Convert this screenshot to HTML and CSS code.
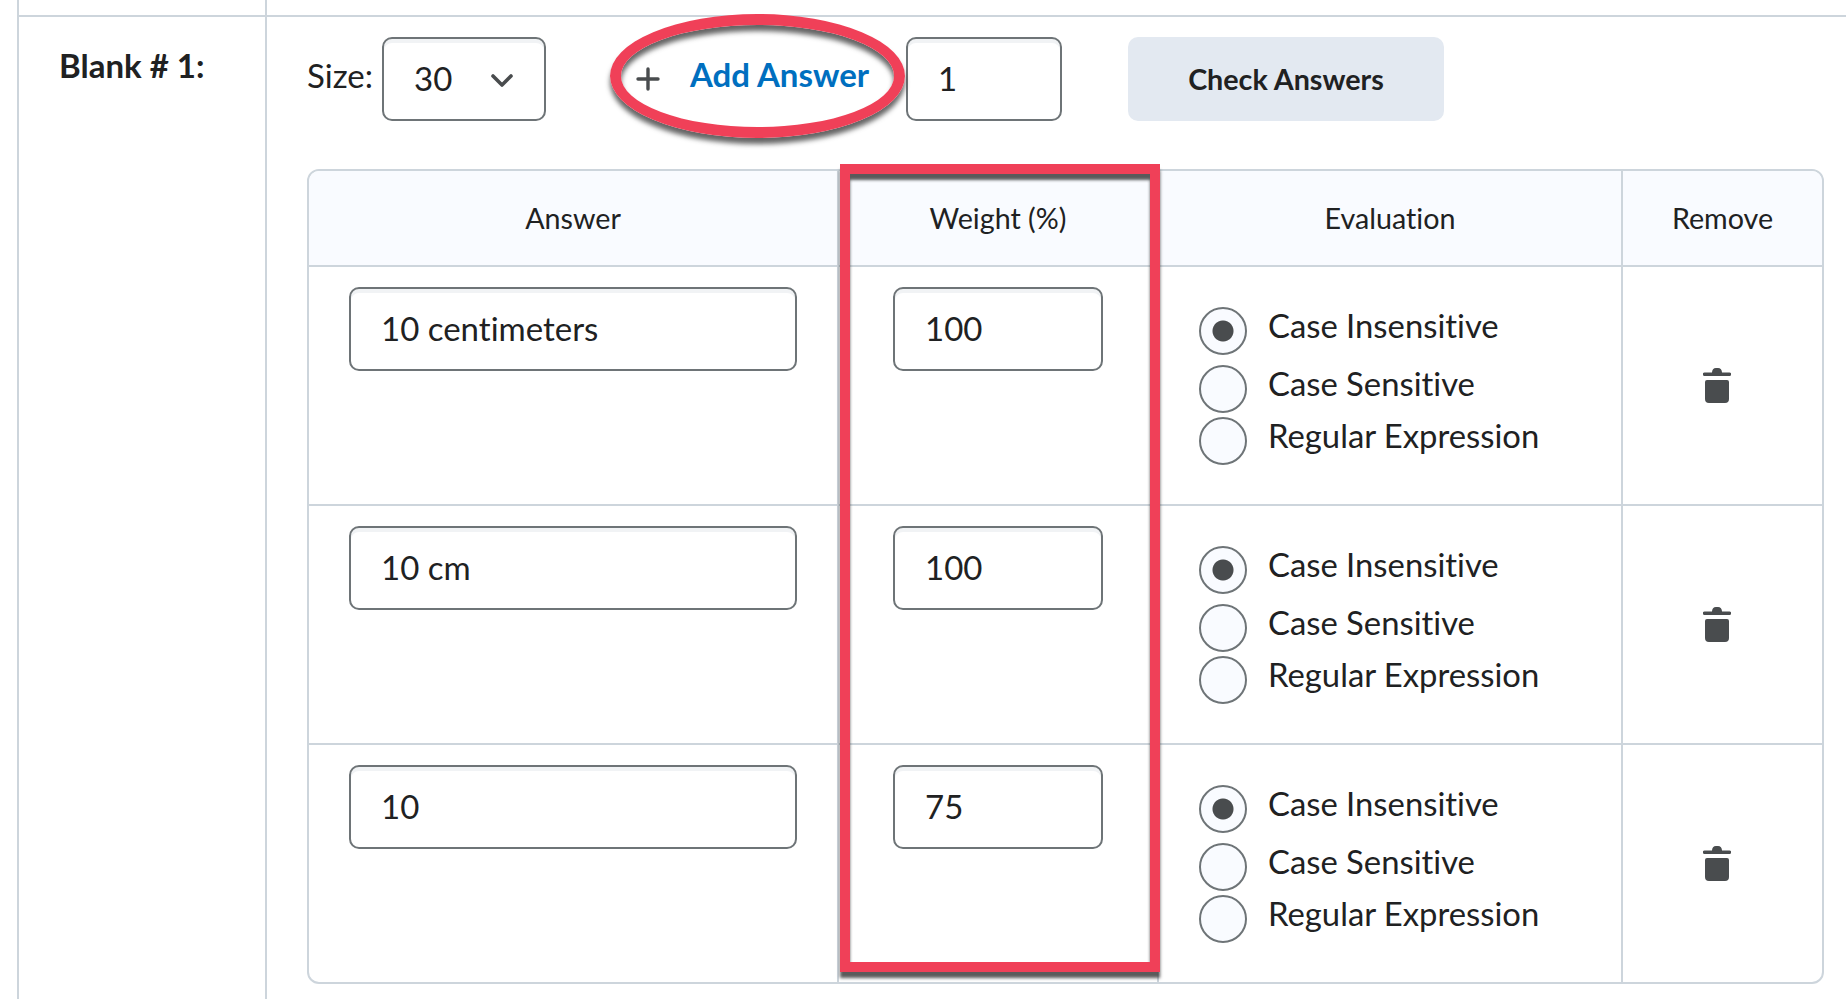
FILE: index.html
```html
<!DOCTYPE html>
<html lang="en">
<head>
    <meta charset="UTF-8">
    <title>Fill in the Blanks</title>
    <link rel="stylesheet" href="styles.css">
</head>
<body>
    <div class="outer">
        <div class="form-row top-row">
            <div class="label-cell"></div>
            <div class="body-cell"></div>
        </div>
        <div class="form-row">
            <div class="label-cell blank-label">Blank # 1:</div>
            <div class="body-cell blank-body">
                <div class="toolbar">
                    <label class="size-label" for="size">Size:</label>
                    <div class="select-wrap">
                        <select id="size" class="size-select">
                            <option>30</option>
                        </select>
                        <svg class="chevron" width="22" height="13" viewBox="0 0 22 13">
                            <path d="M2 2l9 9 9-9" fill="none" stroke="#494c4e" stroke-width="3.6" stroke-linecap="round" stroke-linejoin="round"/>
                        </svg>
                    </div>
                    <button class="add-answer" type="button">
                        <svg width="24" height="24" viewBox="0 0 24 24">
                            <path d="M12 2v20M2 12h20" fill="none" stroke="#494c4e" stroke-width="3.4" stroke-linecap="round"/>
                        </svg>
                        <span>Add Answer</span>
                    </button>
                    <input class="text-input count-input" type="text" value="1">
                    <button class="check-answers" type="button">Check Answers</button>
                </div>

                <table class="answers">
                    <thead>
                        <tr>
                            <th class="col-answer">Answer</th>
                            <th class="col-weight">Weight (%)</th>
                            <th class="col-eval">Evaluation</th>
                            <th class="col-remove">Remove</th>
                        </tr>
                    </thead>
                    <tbody>
                        <tr>
                            <td><input class="text-input answer-input" type="text" value="10 centimeters"></td>
                            <td><input class="text-input weight-input" type="text" value="100"></td>
                            <td class="eval-cell">
                                <label class="eval-opt"><input type="radio" name="eval1" checked><span>Case Insensitive</span></label>
                                <label class="eval-opt"><input type="radio" name="eval1"><span>Case Sensitive</span></label>
                                <label class="eval-opt"><input type="radio" name="eval1"><span>Regular Expression</span></label>
                            </td>
                            <td class="remove-cell">
                                <svg width="28" height="35" viewBox="0 0 28 35"><path fill="#494c4e" d="M9 4.500C9 2 10.500 0 13 0h2c2.500 0 4 2 4 4.500h7.500a1.500 1.500 0 0 1 0 3.500H1.500a1.500 1.500 0 0 1 0-3.500zM4 12h20a2 2 0 0 1 2 2v17a4 4 0 0 1-4 4H6a4 4 0 0 1-4-4V14a2 2 0 0 1 2-2z"/></svg>
                            </td>
                        </tr>
                        <tr>
                            <td><input class="text-input answer-input" type="text" value="10 cm"></td>
                            <td><input class="text-input weight-input" type="text" value="100"></td>
                            <td class="eval-cell">
                                <label class="eval-opt"><input type="radio" name="eval2" checked><span>Case Insensitive</span></label>
                                <label class="eval-opt"><input type="radio" name="eval2"><span>Case Sensitive</span></label>
                                <label class="eval-opt"><input type="radio" name="eval2"><span>Regular Expression</span></label>
                            </td>
                            <td class="remove-cell">
                                <svg width="28" height="35" viewBox="0 0 28 35"><path fill="#494c4e" d="M9 4.500C9 2 10.500 0 13 0h2c2.500 0 4 2 4 4.500h7.500a1.500 1.500 0 0 1 0 3.500H1.500a1.500 1.500 0 0 1 0-3.500zM4 12h20a2 2 0 0 1 2 2v17a4 4 0 0 1-4 4H6a4 4 0 0 1-4-4V14a2 2 0 0 1 2-2z"/></svg>
                            </td>
                        </tr>
                        <tr>
                            <td><input class="text-input answer-input" type="text" value="10"></td>
                            <td><input class="text-input weight-input" type="text" value="75"></td>
                            <td class="eval-cell">
                                <label class="eval-opt"><input type="radio" name="eval3" checked><span>Case Insensitive</span></label>
                                <label class="eval-opt"><input type="radio" name="eval3"><span>Case Sensitive</span></label>
                                <label class="eval-opt"><input type="radio" name="eval3"><span>Regular Expression</span></label>
                            </td>
                            <td class="remove-cell">
                                <svg width="28" height="35" viewBox="0 0 28 35"><path fill="#494c4e" d="M9 4.500C9 2 10.500 0 13 0h2c2.500 0 4 2 4 4.500h7.500a1.500 1.500 0 0 1 0 3.500H1.500a1.500 1.500 0 0 1 0-3.500zM4 12h20a2 2 0 0 1 2 2v17a4 4 0 0 1-4 4H6a4 4 0 0 1-4-4V14a2 2 0 0 1 2-2z"/></svg>
                            </td>
                        </tr>
                    </tbody>
                </table>
            </div>
        </div>
    </div>

    <!-- annotations drawn over the screenshot -->
    <div class="callout-oval"></div>
    <div class="callout-box"></div>
</body>
</html>
```

FILE: styles.css
```css
body {
    margin: 0;
    height: 1000px;
    overflow: hidden;
    position: relative;
    background: #ffffff;
    color: #202122;
    font-family: Lato, "Open Sans", sans-serif;
    font-size: 33px;
    font-variant-ligatures: none;
}

.outer {
    margin-left: 17px;
    border-left: 2px solid #cdd5dc;
}

.form-row {
    display: flex;
}

.top-row {
    height: 17px;
    border-bottom: 2px solid #cdd5dc;
    box-sizing: border-box;
}

.label-cell {
    width: 248px;
    flex-shrink: 0;
    box-sizing: border-box;
    border-right: 2px solid #cdd5dc;
}

.body-cell {
    flex: 1;
}

.blank-label {
    padding: 27px 0 0 40px;
    font-size: 33px;
    font-weight: 700;
    line-height: 42px;
}

.blank-body {
    padding: 20px 22px 15px 40px;
}

.toolbar {
    display: flex;
    align-items: center;
    height: 84px;
    margin-bottom: 48px;
}

.size-label {
    width: 75px;
    margin-bottom: 8px;
}

.select-wrap {
    position: relative;
    height: 84px;
}

.size-select {
    appearance: none;
    width: 164px;
    height: 84px;
    padding: 0 0 2px 30px;
    box-sizing: border-box;
    border: 2px solid #6e7477;
    border-radius: 10px;
    background: #ffffff;
    box-shadow: inset 0 4px 0 #f1f3f5;
    color: #202122;
    font-family: inherit;
    font-size: 33px;
    font-variant-ligatures: none;
}

.chevron {
    position: absolute;
    top: 37px;
    right: 33px;
}

.add-answer {
    display: flex;
    align-items: center;
    gap: 30px;
    width: 270px;
    height: 84px;
    margin-left: 90px;
    padding: 0;
    border: none;
    background: none;
    color: #006fbf;
    font-family: inherit;
    font-size: 33px;
    font-weight: 700;
    font-variant-ligatures: none;
}

.add-answer span {
    margin-bottom: 10px;
}

.text-input {
    height: 84px;
    padding: 0 0 2px 30px;
    box-sizing: border-box;
    border: 2px solid #6e7477;
    border-radius: 10px;
    background: #ffffff;
    box-shadow: inset 0 4px 0 #f1f3f5;
    color: #202122;
    font-family: inherit;
    font-size: 33px;
    font-variant-ligatures: none;
}

.count-input {
    width: 156px;
}

.answer-input {
    width: 448px;
}

.weight-input {
    width: 210px;
}

.check-answers {
    width: 316px;
    height: 84px;
    margin-left: 66px;
    padding: 0;
    border: none;
    border-radius: 10px;
    background: #e3e9f1;
    color: #202122;
    font-family: inherit;
    font-size: 28.7px;
    font-weight: 700;
}

.answers {
    width: 1517px;
    table-layout: fixed;
    border-collapse: separate;
    border-spacing: 0;
    border: 2px solid #cdd5dc;
    border-radius: 12px;
}

.answers th {
    height: 96px;
    padding: 0;
    box-sizing: border-box;
    background: #f9fbff;
    font-size: 28.7px;
    font-weight: 400;
    border-right: 2px solid #cdd5dc;
    border-bottom: 2px solid #cdd5dc;
}

.answers th:first-child {
    border-top-left-radius: 10px;
}

.answers th:last-child {
    border-top-right-radius: 10px;
    border-right: none;
}

.col-answer {
    width: 530px;
}

.col-weight {
    width: 320px;
}

.col-eval {
    width: 464px;
}

.answers td {
    height: 239px;
    padding: 20px 0 0 0;
    box-sizing: border-box;
    vertical-align: top;
    text-align: center;
    border-right: 2px solid #cdd5dc;
    border-bottom: 2px solid #cdd5dc;
}

.answers tbody tr:last-child td {
    height: 237px;
    border-bottom: none;
}

.answers td:last-child {
    border-right: none;
}

.answers .eval-cell {
    padding: 40px 0 0 40px;
    text-align: left;
}

.eval-opt {
    display: flex;
    align-items: center;
    gap: 21px;
    margin-bottom: 4px;
}

.eval-opt:first-child {
    margin-bottom: 10px;
}

.eval-opt input {
    appearance: none;
    width: 48px;
    height: 48px;
    margin: 0;
    flex-shrink: 0;
    box-sizing: border-box;
    border: 2px solid #6e7477;
    border-radius: 50%;
    background: #f9fbff;
}

.eval-opt input:checked {
    background: radial-gradient(circle, #494c4e 10px, #f9fbff 11px);
}

.eval-opt span {
    font-size: 32.8px;
    line-height: 30px;
    margin-bottom: 10px;
}

.answers .remove-cell {
    padding: 0 12px 0 0;
    vertical-align: middle;
}

.remove-cell svg {
    display: block;
    margin: 0 auto;
}

.callout-oval {
    position: absolute;
    left: 610px;
    top: 14px;
    width: 295px;
    height: 124px;
    box-sizing: border-box;
    border: 11px solid #f04058;
    border-radius: 50%;
    box-shadow: 0 6px 5px rgba(50, 50, 50, 0.75), inset 0 6px 5px rgba(50, 50, 50, 0.75);
}

.callout-box {
    position: absolute;
    left: 840px;
    top: 164px;
    width: 320px;
    height: 808px;
    box-sizing: border-box;
    border: 10px solid #f04058;
    box-shadow: 0 6px 3px rgba(50, 50, 50, 0.8), inset 0 6px 3px rgba(50, 50, 50, 0.8);
}
```
